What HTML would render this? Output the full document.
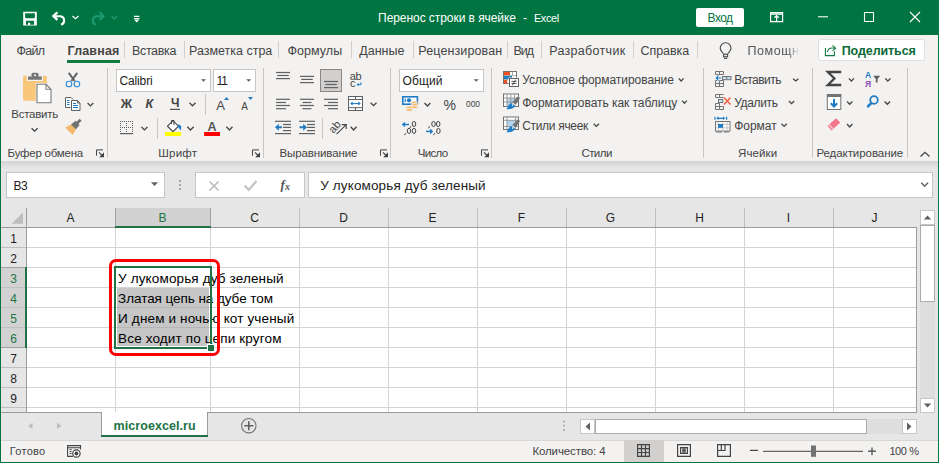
<!DOCTYPE html>
<html><head><meta charset="utf-8">
<style>
*{box-sizing:border-box;margin:0;padding:0}
html,body{width:939px;height:463px;overflow:hidden;background:#f3f2f1;font-family:"Liberation Sans",sans-serif;color:#444;position:relative}
.a{position:absolute}
.t{position:absolute;white-space:pre;line-height:1}
.box{position:absolute;background:#fff;border:1px solid #c6c6c6}
svg{overflow:visible}
</style></head><body>

<div class="a" style="left:0px;top:0px;width:939px;height:35px;background:#017541;"></div>
<div class="t m " style="left:378.10px;top:12.00px;font-size:12px;color:#fff;letter-spacing:-0.064px;">Перенос строки в ячейке</div>
<div class="t m " style="left:523.00px;top:12.00px;font-size:12px;color:#fff;">-</div>
<div class="t m " style="left:533.90px;top:13.00px;font-size:11px;color:#fff;letter-spacing:-0.400px;">Excel</div>
<div class="a" style="left:696px;top:8px;width:48px;height:19px;background:#fff;border-radius:2px"></div>
<div class="t m " style="left:707.60px;top:12.00px;font-size:12px;color:#017541;letter-spacing:-0.567px;">Вход</div>
<svg class="a" style="left:0px;top:0px;" width="939" height="35" viewBox="0 0 939 35">
<path fill="#fff" fill-rule="evenodd" d="M23.2 11.8 H36.8 V25.6 H23.2 Z M25.1 13.2 H34.9 V17.5 L34.1 18.3 H25.9 L25.1 17.5 Z M26 20.8 H34 V24.7 H30.2 V22.8 H28 V24.7 H26 Z"/>
<path fill="none" stroke="#fff" stroke-width="2" stroke-linecap="butt" d="M53.5 16.2 H60.5 A4.3 4.3 0 0 1 61 24.6"/>
<path fill="none" stroke="#fff" stroke-width="2.3" d="M57.4 12.4 L53.4 16.1 L57.4 19.8"/>
<path fill="none" stroke="#fff" stroke-width="1.2" d="M72.5 16 L75.5 18.8 L78.5 16"/>
<path fill="none" stroke="#1f9a74" stroke-width="2" d="M103.3 16.2 H96.3 A4.3 4.3 0 0 0 96 24.6"/>
<path fill="none" stroke="#1f9a74" stroke-width="2" d="M99.6 12.3 L103.6 16.2 L99.6 20.1"/>
<path fill="none" stroke="#1f9a74" stroke-width="1.2" d="M111.8 16.2 L114.5 18.8 L117.2 16.2"/>
<path fill="#fff" d="M134 15.8h5.4v1.2h-5.4z M134 18h5.4v1.1h-5.4z M134 19.6h5.4l-2.7 2.8z"/>
<path fill="none" stroke="#fff" stroke-width="1.2" d="M770.6 12.6h12v9h-12z M770.6 14.2h12 M776.6 15.8v6 M774.4 17.8l2.2-2.1 2.2 2.1"/>
<path fill="none" stroke="#fff" stroke-width="1.1" d="M818 16.8h10"/>
<path fill="none" stroke="#fff" stroke-width="1.1" d="M864.5 12.5h9v9h-9z"/>
<path fill="none" stroke="#fff" stroke-width="1.1" d="M910 12l10 10 M920 12l-10 10"/>
</svg>
<div class="t m " style="left:16.60px;top:45.00px;font-size:12.5px;color:#444;letter-spacing:-0.733px;">Файл</div>
<div class="t m " style="left:67.50px;top:45.00px;font-size:12.5px;color:#444;font-weight:700;letter-spacing:0.167px;">Главная</div>
<div class="t m " style="left:132.00px;top:45.00px;font-size:12.5px;color:#444;letter-spacing:-0.350px;">Вставка</div>
<div class="t m " style="left:189.00px;top:45.00px;font-size:12.5px;color:#444;letter-spacing:-0.008px;">Разметка стра</div>
<div class="t m " style="left:287.50px;top:45.00px;font-size:12.5px;color:#444;letter-spacing:0.050px;">Формулы</div>
<div class="t m " style="left:359.20px;top:45.00px;font-size:12.5px;color:#444;letter-spacing:0.020px;">Данные</div>
<div class="t m " style="left:418.30px;top:45.00px;font-size:12.5px;color:#444;letter-spacing:0.118px;">Рецензирован</div>
<div class="t m " style="left:513.60px;top:45.00px;font-size:12.5px;color:#444;letter-spacing:-1.100px;">Вид</div>
<div class="t m " style="left:549.20px;top:45.00px;font-size:12.5px;color:#444;letter-spacing:0.310px;">Разработчик</div>
<div class="t m " style="left:640.50px;top:45.00px;font-size:12.5px;color:#444;letter-spacing:-0.050px;">Справка</div>
<div class="a" style="left:124px;top:41px;width:1px;height:17px;background:#d2d0ce;"></div>
<div class="a" style="left:184px;top:41px;width:1px;height:17px;background:#d2d0ce;"></div>
<div class="a" style="left:278px;top:41px;width:1px;height:17px;background:#d2d0ce;"></div>
<div class="a" style="left:351px;top:41px;width:1px;height:17px;background:#d2d0ce;"></div>
<div class="a" style="left:413px;top:41px;width:1px;height:17px;background:#d2d0ce;"></div>
<div class="a" style="left:507px;top:41px;width:1px;height:17px;background:#d2d0ce;"></div>
<div class="a" style="left:541px;top:41px;width:1px;height:17px;background:#d2d0ce;"></div>
<div class="a" style="left:633px;top:41px;width:1px;height:17px;background:#d2d0ce;"></div>
<div class="a" style="left:697px;top:41px;width:1px;height:17px;background:#d2d0ce;"></div>
<div class="a" style="left:67px;top:60px;width:53px;height:3px;background:#107c41;"></div>
<div class="t m " style="left:747.60px;top:45.00px;font-size:12.5px;color:#555;letter-spacing:0.540px;-webkit-mask-image:linear-gradient(90deg,#000 0,#000 40px,transparent 51px);mask-image:linear-gradient(90deg,#000 0,#000 40px,transparent 51px);">Помощн</div>
<div class="a" style="left:818px;top:39px;width:107px;height:22px;background:#fff;border:1px solid #e1dfdd;border-radius:3px"></div>
<div class="t m " style="left:841.70px;top:45.00px;font-size:12.5px;color:#0b6a37;font-weight:700;letter-spacing:-0.100px;">Поделиться</div>
<svg class="a" style="left:0px;top:0px;z-index:6" width="939" height="70" viewBox="0 0 939 70"><path fill="none" stroke="#444" stroke-width="1.1" d="M723.2 53.6 C722.7 52.2 720.2 50.8 720.2 48.2 A5.4 5.4 0 0 1 731 48.2 C731 50.8 728.5 52.2 728 53.6"/><rect x="723.6" y="54.2" width="4" height="2.6" fill="none" stroke="#444" stroke-width="1.1"/><rect x="724" y="57.8" width="3.2" height="1.1" fill="#444"/><path fill="none" stroke="#107c41" stroke-width="1.1" d="M825.4 48.1 V55.6 H834.4 V51.2"/><path fill="none" stroke="#107c41" stroke-width="1.1" d="M827.4 51.8 C828 48.5 830.5 47.5 834.5 48.2 M832.5 45.3 L835.6 48.3 L832.5 50.9"/></svg>
<div class="a" style="left:107px;top:68px;width:1px;height:90px;background:#c8c6c4;"></div>
<div class="a" style="left:263px;top:68px;width:1px;height:90px;background:#c8c6c4;"></div>
<div class="a" style="left:390px;top:68px;width:1px;height:90px;background:#c8c6c4;"></div>
<div class="a" style="left:491px;top:68px;width:1px;height:90px;background:#c8c6c4;"></div>
<div class="a" style="left:703px;top:68px;width:1px;height:90px;background:#c8c6c4;"></div>
<div class="a" style="left:812px;top:68px;width:1px;height:90px;background:#c8c6c4;"></div>
<div class="a" style="left:907px;top:68px;width:1px;height:90px;background:#c8c6c4;"></div>
<div class="t m " style="left:7.60px;top:148.00px;font-size:11.5px;color:#444;letter-spacing:-0.227px;">Буфер обмена</div>
<div class="t m " style="left:158.30px;top:148.00px;font-size:11.5px;color:#444;letter-spacing:0.225px;">Шрифт</div>
<div class="t m " style="left:279.50px;top:148.00px;font-size:11.5px;color:#444;letter-spacing:-0.109px;">Выравнивание</div>
<div class="t m " style="left:417.80px;top:148.00px;font-size:11.5px;color:#444;letter-spacing:-0.700px;">Число</div>
<div class="t m " style="left:581.40px;top:148.00px;font-size:11.5px;color:#444;letter-spacing:-0.550px;">Стили</div>
<div class="t m " style="left:738.00px;top:148.00px;font-size:11.5px;color:#444;letter-spacing:0.120px;">Ячейки</div>
<div class="t m " style="left:816.40px;top:148.00px;font-size:11.5px;color:#444;letter-spacing:-0.062px;">Редактирование</div>
<div class="t m " style="left:11.20px;top:109.00px;font-size:11.5px;color:#444;letter-spacing:-0.229px;">Вставить</div>
<div class="box" style="left:116px;top:69px;width:95px;height:23px;border-color:#c8c6c4"></div>
<div class="box" style="left:213px;top:69px;width:43px;height:23px;border-color:#c8c6c4"></div>
<div class="box" style="left:399px;top:69px;width:85px;height:23px;border-color:#c8c6c4"></div>
<div class="a" style="left:320px;top:69px;width:22px;height:23px;background:#d2d0ce;border:1px solid #8a8886"></div>
<div class="t m " style="left:119.40px;top:75.00px;font-size:12px;color:#222;letter-spacing:-0.117px;">Calibri</div>
<div class="t m " style="left:216.50px;top:75.00px;font-size:12px;color:#222;">1</div>
<div class="t m " style="left:221.20px;top:75.00px;font-size:12px;color:#222;">1</div>
<div class="t m " style="left:402.40px;top:75.00px;font-size:12px;color:#222;letter-spacing:0.175px;">Общий</div>
<div class="t m " style="left:522.20px;top:74.00px;font-size:12px;color:#444;letter-spacing:-0.041px;">Условное форматирование</div>
<div class="t m " style="left:522.20px;top:97.00px;font-size:12px;color:#444;letter-spacing:-0.046px;">Форматировать как таблицу</div>
<div class="t m " style="left:522.20px;top:120.00px;font-size:12px;color:#444;letter-spacing:-0.310px;">Стили ячеек</div>
<div class="t m " style="left:734.30px;top:74.00px;font-size:12px;color:#444;letter-spacing:-0.529px;">Вставить</div>
<div class="t m " style="left:734.30px;top:97.00px;font-size:12px;color:#444;letter-spacing:-0.367px;">Удалить</div>
<div class="t m " style="left:734.30px;top:120.00px;font-size:12px;color:#444;letter-spacing:-0.060px;">Формат</div>
<div class="t m " style="left:120.80px;top:98.00px;font-size:12.5px;color:#444;font-weight:700;">Ж</div>
<div class="t m " style="left:145.60px;top:98.00px;font-size:12.5px;color:#444;font-weight:700;font-style:italic;">К</div>
<div class="t m " style="left:171.00px;top:97.00px;font-size:12px;color:#444;font-weight:700;">Ч</div>
<div class="t m " style="left:216.30px;top:99.00px;font-size:13px;color:#444;">A</div>
<div class="t m " style="left:241.30px;top:102.00px;font-size:10px;color:#444;">A</div>
<div class="t m " style="left:207.60px;top:121.00px;font-size:12.5px;color:#555;font-weight:700;">A</div>
<div class="t m " style="left:443.50px;top:98.00px;font-size:14px;color:#444;">%</div>
<div class="t m " style="left:466.00px;top:100.00px;font-size:8.5px;color:#444;letter-spacing:-0.100px;">000</div>
<div class="t m " style="left:349.70px;top:71.00px;font-size:11px;color:#444;letter-spacing:-0.300px;">ab</div>
<div class="t m " style="left:349.90px;top:78.00px;font-size:11px;color:#444;">c</div>
<div class="a" style="left:157px;top:118px;width:1px;height:21px;background:#c8c6c4;"></div>
<div class="a" style="left:205px;top:94px;width:1px;height:21px;background:#c8c6c4;"></div>
<div class="a" style="left:322px;top:118px;width:1px;height:21px;background:#c8c6c4;"></div>
<div class="t m " style="left:865.00px;top:71.00px;font-size:8.5px;color:#1e7bc4;font-weight:700;">A</div>
<div class="t m " style="left:865.00px;top:80.00px;font-size:8.5px;color:#8c50b4;font-weight:700;">Я</div>
<svg class="a" style="left:0px;top:0px;z-index:5" width="939" height="463" viewBox="0 0 939 463"><rect x="23" y="75.8" width="24" height="25" rx="1.5" fill="#f8c77a"/><path fill="#737373" stroke="#f3f2f1" stroke-width="1.2" d="M27.4 76 H42.4 V80.3 H27.4 Z"/><rect x="31.5" y="72.8" width="7" height="4.5" rx="1.5" fill="#737373"/><circle cx="35" cy="75.2" r="1" fill="#fff"/><path fill="#fff" stroke="#f3f2f1" stroke-width="2.5" d="M37 84.3 H46 L51 89.3 V102.7 H37 Z"/><path fill="#fff" stroke="#7a7a7a" stroke-width="1.1" d="M37 84.3 H46 L51 89.3 V102.7 H37 Z"/><path fill="none" stroke="#7a7a7a" stroke-width="1.1" d="M46 84.3 V89.3 H51"/><path fill="none" stroke="#444" stroke-width="1.3" d="M31.6 128.2 L34.6 131.2 L37.6 128.2"/><path fill="none" stroke="#616161" stroke-width="2" d="M68.8 72.8 L74.6 81 M77.2 72.8 L71.4 81"/><circle cx="69" cy="84" r="2.8" fill="none" stroke="#2b88d8" stroke-width="1.1"/><circle cx="76.9" cy="84" r="2.8" fill="none" stroke="#2b88d8" stroke-width="1.1"/><path fill="#fff" stroke="#616161" stroke-width="1" d="M65.5 97.5 H71 L73 99.5 V107.5 H65.5 Z"/><path fill="none" stroke="#1e7bc4" stroke-width="1" d="M67 100.5 H69.5 M67 102.5 H69.5 M67 104.5 H69.5"/><path fill="#fff" stroke="#f3f2f1" stroke-width="2" d="M71.5 100.5 H77.5 L80 103 V110.5 H71.5 Z"/><path fill="#fff" stroke="#616161" stroke-width="1" d="M71.5 100.5 H77.5 L80 103 V110.5 H71.5 Z M77.5 100.5 V103 H80"/><path fill="none" stroke="#1e7bc4" stroke-width="1" d="M73 103.5 H76 M73 105.5 H78 M73 107.5 H78"/><path fill="none" stroke="#444" stroke-width="1.3" d="M87.6 103 L90.44999999999999 105.9 L93.3 103"/><path fill="#f4b968" d="M65.2 127.6 L71.5 124.2 L76.2 129 L72.6 135 Z"/><path fill="#737373" d="M71 124.6 L75.5 120.8 L79.6 125 L75.9 129.3 Z"/><path fill="none" stroke="#737373" stroke-width="3" d="M76.5 123.8 L80.6 119.8"/><path fill="none" stroke="#444" stroke-width="1.3" d="M189.5 102.8 L192.5 105.8 L195.5 102.8"/><rect x="170" y="108.8" width="10" height="1.1" fill="#444"/><path fill="#1e7bc4" d="M224 100 L226.5 97 L229 100 Z M248 97.1 H253 L250.5 100 Z"/><rect x="120" y="121" width="1" height="1" fill="#616161"/><rect x="120" y="123" width="1" height="1" fill="#616161"/><rect x="120" y="125" width="1" height="1" fill="#616161"/><rect x="120" y="127" width="1" height="1" fill="#616161"/><rect x="120" y="129" width="1" height="1" fill="#616161"/><rect x="120" y="131" width="1" height="1" fill="#616161"/><rect x="122" y="121" width="1" height="1" fill="#616161"/><rect x="122" y="127" width="1" height="1" fill="#616161"/><rect x="124" y="121" width="1" height="1" fill="#616161"/><rect x="124" y="127" width="1" height="1" fill="#616161"/><rect x="126" y="121" width="1" height="1" fill="#616161"/><rect x="126" y="123" width="1" height="1" fill="#616161"/><rect x="126" y="125" width="1" height="1" fill="#616161"/><rect x="126" y="127" width="1" height="1" fill="#616161"/><rect x="126" y="129" width="1" height="1" fill="#616161"/><rect x="126" y="131" width="1" height="1" fill="#616161"/><rect x="128" y="121" width="1" height="1" fill="#616161"/><rect x="128" y="127" width="1" height="1" fill="#616161"/><rect x="130" y="121" width="1" height="1" fill="#616161"/><rect x="130" y="127" width="1" height="1" fill="#616161"/><rect x="132" y="121" width="1" height="1" fill="#616161"/><rect x="132" y="123" width="1" height="1" fill="#616161"/><rect x="132" y="125" width="1" height="1" fill="#616161"/><rect x="132" y="127" width="1" height="1" fill="#616161"/><rect x="132" y="129" width="1" height="1" fill="#616161"/><rect x="132" y="131" width="1" height="1" fill="#616161"/><rect x="120" y="133" width="13.2" height="1.2" fill="#616161"/><path fill="none" stroke="#444" stroke-width="1.3" d="M141.5 127 L144.45 129.9 L147.4 127"/><path fill="#fff" stroke="#444" stroke-width="1.1" d="M167.5 126.2 L173 120.7 L178.5 126.2 L173 131.7 Z"/><path fill="none" stroke="#444" stroke-width="1" d="M171.5 124 V120.5 H174 V125"/><path fill="#1e7bc4" d="M177.5 124.5 Q181.5 124.3 181.3 128 L180.5 130.4 L178.3 127 Z"/><rect x="165" y="132" width="16.2" height="4" fill="#ffff00"/><path fill="none" stroke="#444" stroke-width="1.3" d="M187.3 126.8 L190.5 130 L193.7 126.8"/><rect x="204.1" y="132" width="15.9" height="4" fill="#ff0000"/><path fill="none" stroke="#444" stroke-width="1.3" d="M226.4 126.8 L229.45 130 L232.5 126.8"/><rect x="276" y="71.9" width="14" height="1.2" fill="#616161"/><rect x="277.25" y="74.9" width="11.5" height="1.2" fill="#616161"/><rect x="276" y="78.0" width="14" height="1.2" fill="#616161"/><rect x="300" y="75.8" width="14" height="1.2" fill="#616161"/><rect x="301.25" y="78.8" width="11.5" height="1.2" fill="#616161"/><rect x="300" y="82.0" width="14" height="1.2" fill="#616161"/><rect x="324" y="80.9" width="14" height="1.2" fill="#616161"/><rect x="325.25" y="83.9" width="11.5" height="1.2" fill="#616161"/><rect x="324" y="87.0" width="14" height="1.2" fill="#616161"/><rect x="276" y="98.7" width="14" height="1.2" fill="#616161"/><rect x="276" y="101.9" width="10" height="1.2" fill="#616161"/><rect x="276" y="104.9" width="14" height="1.2" fill="#616161"/><rect x="276" y="108.1" width="10" height="1.2" fill="#616161"/><rect x="300" y="98.7" width="14" height="1.2" fill="#616161"/><rect x="302.5" y="101.9" width="9.0" height="1.2" fill="#616161"/><rect x="300" y="104.9" width="14" height="1.2" fill="#616161"/><rect x="302.5" y="108.1" width="9.0" height="1.2" fill="#616161"/><rect x="324" y="98.7" width="14" height="1.2" fill="#616161"/><rect x="328" y="101.9" width="10" height="1.2" fill="#616161"/><rect x="324" y="104.9" width="14" height="1.2" fill="#616161"/><rect x="328" y="108.1" width="10" height="1.2" fill="#616161"/><path fill="none" stroke="#1e7bc4" stroke-width="1" d="M361 82.3 V84.6 H357.5"/><path fill="#1e7bc4" d="M356.6 84.6 L358.6 83 V86.2 Z"/><rect x="348.5" y="96.5" width="14" height="14" fill="#fff" stroke="#616161" stroke-width="1"/><path fill="none" stroke="#616161" stroke-width="1" d="M348.5 99.5 H362.5 M348.5 107.7 H362.5 M355.5 96.5 V99.5 M355.5 107.7 V110.5"/><path fill="none" stroke="#1e7bc4" stroke-width="1.1" d="M351 103.6 H360"/><path fill="#1e7bc4" d="M350.2 103.6 L352.6 101.6 V105.6 Z M360.8 103.6 L358.4 101.6 V105.6 Z"/><path fill="none" stroke="#444" stroke-width="1.3" d="M370.6 102.8 L373.55 105.7 L376.5 102.8"/><rect x="275" y="120.7" width="16" height="1.2" fill="#616161"/><rect x="275" y="133.0" width="16" height="1.2" fill="#616161"/><rect x="283" y="123.9" width="8" height="1.2" fill="#616161"/><rect x="283" y="126.8" width="8" height="1.2" fill="#616161"/><rect x="283" y="130.0" width="8" height="1.2" fill="#616161"/><path fill="#1e7bc4" d="M275 127.3 L278.8 123.8 V126.3 H282 V128.3 H278.8 V130.8 Z"/><rect x="299" y="120.7" width="16" height="1.2" fill="#616161"/><rect x="299" y="133.0" width="16" height="1.2" fill="#616161"/><rect x="307" y="123.9" width="8" height="1.2" fill="#616161"/><rect x="307" y="126.8" width="8" height="1.2" fill="#616161"/><rect x="307" y="130.0" width="8" height="1.2" fill="#616161"/><path fill="#1e7bc4" d="M307 127.3 L303.2 123.8 V126.3 H299.5 V128.3 H303.2 V130.8 Z"/><text x="0" y="0" transform="translate(333.5,134) rotate(-50)" font-family="Liberation Sans" font-size="11" fill="#444">ab</text><path fill="none" stroke="#444" stroke-width="1.1" d="M336.6 134.2 L346 124.8 M341.8 124.6 H346.2 V129"/><path fill="none" stroke="#444" stroke-width="1.3" d="M350.7 126.8 L353.6 130 L356.5 126.8"/><rect x="402.8" y="96.8" width="14.6" height="7.4" fill="#fff" stroke="#1e7bc4" stroke-width="1.6"/><circle cx="409" cy="100.3" r="2.1" fill="#1e7bc4"/><rect x="404.6" y="98.6" width="1.2" height="3.5" fill="#1e7bc4"/><ellipse cx="414.5" cy="102.6" rx="3.4" ry="1.35" fill="#f4b968" stroke="#f3f2f1" stroke-width="0.8"/><ellipse cx="414.5" cy="104.9" rx="3.4" ry="1.35" fill="#f4b968" stroke="#f3f2f1" stroke-width="0.8"/><ellipse cx="414.5" cy="107.2" rx="3.4" ry="1.35" fill="#f4b968" stroke="#f3f2f1" stroke-width="0.8"/><ellipse cx="409.4" cy="107.4" rx="3.4" ry="1.35" fill="#f4b968" stroke="#f3f2f1" stroke-width="0.8"/><ellipse cx="409.4" cy="109.9" rx="3.4" ry="1.35" fill="#f4b968" stroke="#f3f2f1" stroke-width="0.8"/><path fill="none" stroke="#444" stroke-width="1.3" d="M424.5 103 L427.45 106 L430.4 103"/><ellipse cx="414" cy="124" rx="1.75" ry="2.55" fill="none" stroke="#444" stroke-width="1"/><path fill="none" stroke="#444" stroke-width="1" d="M411.0 126.2 L409.6 128.2"/><ellipse cx="409" cy="130.9" rx="1.75" ry="2.55" fill="none" stroke="#444" stroke-width="1"/><ellipse cx="414" cy="130.9" rx="1.75" ry="2.55" fill="none" stroke="#444" stroke-width="1"/><path fill="none" stroke="#444" stroke-width="1" d="M405.79999999999995 133.2 L404.4 135.2"/><ellipse cx="433.5" cy="124" rx="1.75" ry="2.55" fill="none" stroke="#444" stroke-width="1"/><ellipse cx="438.2" cy="124" rx="1.75" ry="2.55" fill="none" stroke="#444" stroke-width="1"/><path fill="none" stroke="#444" stroke-width="1" d="M429.79999999999995 126.2 L428.4 128.2"/><ellipse cx="438.4" cy="130.9" rx="1.75" ry="2.55" fill="none" stroke="#444" stroke-width="1"/><path fill="none" stroke="#444" stroke-width="1" d="M434.79999999999995 133.2 L433.4 135.2"/><path fill="none" stroke="#1e7bc4" stroke-width="1.4" d="M402.8 124.5 H409"/><path fill="none" stroke="#1e7bc4" stroke-width="1.4" d="M405 122.4 L402.8 124.5 L405 126.6"/><path fill="none" stroke="#1e7bc4" stroke-width="1.4" d="M426 131.4 H432.2"/><path fill="none" stroke="#1e7bc4" stroke-width="1.4" d="M430 129.3 L432.2 131.4 L430 133.5"/><path fill="none" stroke="#444" stroke-width="1" d="M96.5 155.7 V149.9 H103"/><path fill="none" stroke="#444" stroke-width="1.1" d="M99 152.3 L103.2 156.5"/><path fill="#444" d="M104 152.2 V157.2 H99.2 Z"/><path fill="none" stroke="#444" stroke-width="1" d="M252.5 155.7 V149.9 H259"/><path fill="none" stroke="#444" stroke-width="1.1" d="M255 152.3 L259.2 156.5"/><path fill="#444" d="M260 152.2 V157.2 H255.2 Z"/><path fill="none" stroke="#444" stroke-width="1" d="M380.5 155.7 V149.9 H387"/><path fill="none" stroke="#444" stroke-width="1.1" d="M383 152.3 L387.2 156.5"/><path fill="#444" d="M388 152.2 V157.2 H383.2 Z"/><path fill="none" stroke="#444" stroke-width="1" d="M481.5 155.7 V149.9 H488"/><path fill="none" stroke="#444" stroke-width="1.1" d="M484 152.3 L488.2 156.5"/><path fill="#444" d="M489 152.2 V157.2 H484.2 Z"/><rect x="503.5" y="71.5" width="13" height="12" fill="#fff" stroke="#737373" stroke-width="1"/><rect x="504" y="72" width="6" height="3.3" fill="#f25022"/><rect x="504" y="76" width="8" height="3.3" fill="#1e7bc4"/><rect x="504" y="80" width="3.2" height="3.3" fill="#f25022"/><path fill="none" stroke="#999" stroke-width="0.8" d="M504 75.6 H516 M504 79.6 H508 M512.5 72 V75.6"/><rect x="509.5" y="78.5" width="9" height="8" fill="#fff" stroke="#f3f2f1" stroke-width="2"/><rect x="509.5" y="78.5" width="9" height="8" fill="#fff" stroke="#616161" stroke-width="1"/><path fill="none" stroke="#444" stroke-width="0.9" d="M511.5 81.4 H516.5 M511.5 83.6 H516.5 M515.6 79.7 L512.4 85.3"/><rect x="503.5" y="94.0" width="15" height="12.5" fill="#fff" stroke="#737373" stroke-width="1"/><rect x="507" y="98.0" width="7.5" height="8" fill="#b4d4ee"/><path fill="none" stroke="#8f8f8f" stroke-width="0.9" d="M507 94.5 V106.5 M510.8 94.5 V106.5 M514.6 94.5 V106.5 M504 98.0 H518 M504 102.0 H518"/><path fill="#f3f2f1" d="M518.8 96.5 L520 97.5 L512 108.5 L505.5 109.5 Z"/><path fill="#737373" d="M518 96.3 L520 98.1 L515.8 104.7 L512.2 102.3 Z"/><path fill="#1e7bc4" d="M511.6 102.9 L515.2 105.7 Q513.8 109.1 506.6 109.3 Q508.2 104.5 511.6 102.9 Z"/><circle cx="512.6" cy="105.1" r="0.8" fill="#fff"/><rect x="503.5" y="117.0" width="15" height="12.5" fill="#fff" stroke="#737373" stroke-width="1"/><rect x="507" y="120.5" width="9" height="6" fill="#b4d4ee"/><path fill="none" stroke="#8f8f8f" stroke-width="0.9" d="M507 117.5 V129.5 M515.5 117.5 V129.5 M504 120.3 H518 M504 126.5 H518"/><path fill="#f3f2f1" d="M518.8 119.5 L520 120.5 L512 131.5 L505.5 132.5 Z"/><path fill="#737373" d="M518 119.3 L520 121.1 L515.8 127.7 L512.2 125.3 Z"/><path fill="#1e7bc4" d="M511.6 125.9 L515.2 128.7 Q513.8 132.1 506.6 132.3 Q508.2 127.5 511.6 125.9 Z"/><circle cx="512.6" cy="128.1" r="0.8" fill="#fff"/><path fill="none" stroke="#444" stroke-width="1.3" d="M678.7 78.4 L681.1500000000001 81 L683.6 78.4"/><path fill="none" stroke="#444" stroke-width="1.3" d="M682.1 100.6 L684.45 103.2 L686.8 100.6"/><path fill="none" stroke="#444" stroke-width="1.3" d="M593.7 123.8 L596.35 126.4 L599 123.8"/><path fill="none" stroke="#737373" stroke-width="1" d="M715.5 71.5 H723.5 V74.5 H715.5 Z M719.5 71.5 V74.5"/><path fill="none" stroke="#737373" stroke-width="1" d="M715.5 80.5 H723.5 V86.5 H715.5 Z M715.5 83.5 H723.5 M719.5 80.5 V86.5"/><rect x="722.5" y="76.5" width="8.5" height="3.2" fill="#c5e0f5" stroke="#737373" stroke-width="1"/><path stroke="#737373" stroke-width="1" d="M726.7 76.5 V79.7"/><path fill="#1e7bc4" stroke="#f3f2f1" stroke-width="0.8" d="M715 78 L718.3 74.8 L719.5 75.9 L718 77.1 H721.5 V78.9 H718 L719.5 80.1 L718.3 81.2 Z"/><path fill="none" stroke="#737373" stroke-width="1" d="M723.5 94.5 H715.5 V97.5 H719.5 V94.5 M723.5 97.5 H719.5"/><rect x="718.5" y="99.5" width="4.3" height="3" fill="#c5e0f5" stroke="#737373" stroke-width="1"/><path fill="none" stroke="#737373" stroke-width="1" d="M715.5 103.5 H719.5 V109.5 H715.5 Z M715.5 106.5 H723.5 V109.5 H719.5 M723.5 106.5"/><path fill="none" stroke="#f25c3f" stroke-width="1.5" d="M724 97.5 L730.5 104.5 M730.5 97.5 L724 104.5"/><path fill="none" stroke="#1e7bc4" stroke-width="1.2" d="M715 116.8 V119.8 M726.6 116.8 V119.8 M717 118.3 H724.6"/><path fill="#1e7bc4" d="M716.4 118.3 L718.6 116.5 V120.1 Z M725.2 118.3 L723 116.5 V120.1 Z"/><rect x="715.5" y="121.5" width="14.5" height="9.5" fill="#fff" stroke="#737373" stroke-width="1"/><path fill="none" stroke="#bbb" stroke-width="0.8" d="M718.5 122 V131 M723 122 V131 M727 122 V131 M716 124.3 H729.5 M716 127.8 H729.5"/><rect x="718" y="124" width="5" height="3.8" fill="#1e7bc4"/><path fill="none" stroke="#737373" stroke-width="1" d="M716 132 H722 M724 132 H729"/><path fill="none" stroke="#444" stroke-width="1.3" d="M793.1 78.8 L795.75 81 L798.4 78.8"/><path fill="none" stroke="#444" stroke-width="1.3" d="M788.9 101 L791.55 103.6 L794.2 101"/><path fill="none" stroke="#444" stroke-width="1.3" d="M781.5 123.8 L784.15 126.4 L786.8 123.8"/><path fill="none" stroke="#444" stroke-width="2.3" stroke-linejoin="miter" d="M841.2 72 H827.8 L834.4 78.5 L827.8 85 H841.2"/><path fill="none" stroke="#444" stroke-width="1.3" d="M848.8 78.4 L851.4 81 L854 78.4"/><path fill="none" stroke="#444" stroke-width="1.3" d="M885.2 78.4 L887.85 81 L890.5 78.4"/><path fill="#616161" d="M873.2 75.8 H880.2 L877.6 79 V82.6 H875.8 V79 Z"/><rect x="827.3" y="94.5" width="13.5" height="15" fill="#fff" stroke="#737373" stroke-width="1"/><rect x="827" y="94" width="14.2" height="3" fill="#737373"/><path fill="none" stroke="#1e7bc4" stroke-width="2" d="M834 99 V106"/><path fill="none" stroke="#1e7bc4" stroke-width="2" d="M830.8 103.3 L834 106.5 L837.2 103.3"/><path fill="none" stroke="#444" stroke-width="1.3" d="M847 101.5 L849.7 104.3 L852.4 101.5"/><circle cx="874" cy="100" r="3.8" fill="none" stroke="#1e7bc4" stroke-width="1.8"/><path fill="none" stroke="#1e7bc4" stroke-width="2.6" stroke-linecap="round" d="M868 106.3 L871.2 103.1"/><path fill="none" stroke="#444" stroke-width="1.3" d="M884.6 101.5 L887.35 104.3 L890.1 101.5"/><path fill="#f4768a" d="M827.5 126 L836 118.2 L840.2 122.5 L831.7 130.5 Z"/><path fill="#fbc3cc" d="M829.5 124.2 L833.7 128.3 L832.5 129.4 L828.4 125.3 Z"/><path fill="none" stroke="#444" stroke-width="1.3" d="M847 124 L849.7 127 L852.4 124"/><path fill="none" stroke="#444" stroke-width="1.3" d="M920.5 156.5 L925 152.3 L929.5 156.5"/><path fill="#616161" d="M201 79.2 H206 L203.5 81.8 Z"/><path fill="#616161" d="M246.2 79.2 H251.2 L248.7 81.8 Z"/><path fill="#616161" d="M473.6 79.2 H478.8 L476.20000000000005 81.8 Z"/></svg>
<div class="a" style="left:0px;top:161px;width:939px;height:47px;background:#e6e6e6;"></div>
<div class="a" style="left:0;top:161px;width:939px;height:7px;background:linear-gradient(#d2d2d2,#e6e6e6)"></div>
<div class="box" style="left:6px;top:172px;width:159px;height:26px"></div>
<div class="box" style="left:195px;top:172px;width:110px;height:26px"></div>
<div class="box" style="left:308px;top:172px;width:625px;height:26px"></div>
<div class="t m " style="left:13.40px;top:180.00px;font-size:12px;color:#222;letter-spacing:-0.300px;">B3</div>
<div class="t m " style="left:320.20px;top:179.00px;font-size:13.5px;color:#222;letter-spacing:0.141px;">У лукоморья дуб зеленый</div>
<svg class="a" style="left:0px;top:0px;z-index:6" width="939" height="463" viewBox="0 0 939 463"><path fill="#616161" d="M151 182.2 H158 L154.5 186 Z"/><circle cx="180" cy="181" r="0.9" fill="#888"/><circle cx="180" cy="185" r="0.9" fill="#888"/><circle cx="180" cy="189" r="0.9" fill="#888"/><path fill="none" stroke="#bdbdbd" stroke-width="1.7" d="M209.5 181.5 L218.5 190.5 M218.5 181.5 L209.5 190.5"/><path fill="none" stroke="#c4c4c4" stroke-width="2.2" d="M244.5 185.5 L248.8 189.8 L256.5 181"/><text x="280.5" y="189" font-family="Liberation Serif" font-style="italic" font-weight="bold" font-size="13" fill="#555">f</text><text x="285" y="190.3" font-family="Liberation Serif" font-style="italic" font-weight="bold" font-size="10" fill="#555">x</text><path fill="none" stroke="#616161" stroke-width="1.5" d="M921.3 182.8 L924.6 186.2 L928 182.8"/></svg>
<div class="a" style="left:0px;top:208px;width:939px;height:20px;background:#e6e6e6;"></div>
<div class="a" style="left:0px;top:228px;width:27px;height:184px;background:#e6e6e6;"></div>
<div class="a" style="left:917px;top:228px;width:21px;height:185px;background:#e6e6e6;"></div>
<div class="a" style="left:27px;top:228px;width:889px;height:184px;background:#fff;"></div>
<div class="a" style="left:115px;top:208px;width:95px;height:19px;background:#d2d2d2;"></div>
<div class="a" style="left:115px;top:226px;width:95px;height:2px;background:#217346;"></div>
<div class="a" style="left:1px;top:268px;width:25px;height:80px;background:#d2d2d2;"></div>
<div class="a" style="left:25px;top:268px;width:2px;height:80px;background:#217346;"></div>
<div class="a" style="left:115px;top:228px;width:1px;height:184px;background:#d4d4d4;"></div>
<div class="a" style="left:115px;top:208px;width:1px;height:19px;background:#bfbfbf;"></div>
<div class="a" style="left:210px;top:228px;width:1px;height:184px;background:#d4d4d4;"></div>
<div class="a" style="left:210px;top:208px;width:1px;height:19px;background:#bfbfbf;"></div>
<div class="a" style="left:299px;top:228px;width:1px;height:184px;background:#d4d4d4;"></div>
<div class="a" style="left:299px;top:208px;width:1px;height:19px;background:#bfbfbf;"></div>
<div class="a" style="left:388px;top:228px;width:1px;height:184px;background:#d4d4d4;"></div>
<div class="a" style="left:388px;top:208px;width:1px;height:19px;background:#bfbfbf;"></div>
<div class="a" style="left:477px;top:228px;width:1px;height:184px;background:#d4d4d4;"></div>
<div class="a" style="left:477px;top:208px;width:1px;height:19px;background:#bfbfbf;"></div>
<div class="a" style="left:566px;top:228px;width:1px;height:184px;background:#d4d4d4;"></div>
<div class="a" style="left:566px;top:208px;width:1px;height:19px;background:#bfbfbf;"></div>
<div class="a" style="left:655px;top:228px;width:1px;height:184px;background:#d4d4d4;"></div>
<div class="a" style="left:655px;top:208px;width:1px;height:19px;background:#bfbfbf;"></div>
<div class="a" style="left:744px;top:228px;width:1px;height:184px;background:#d4d4d4;"></div>
<div class="a" style="left:744px;top:208px;width:1px;height:19px;background:#bfbfbf;"></div>
<div class="a" style="left:833px;top:228px;width:1px;height:184px;background:#d4d4d4;"></div>
<div class="a" style="left:833px;top:208px;width:1px;height:19px;background:#bfbfbf;"></div>
<div class="a" style="left:27px;top:247px;width:889px;height:1px;background:#d4d4d4;"></div>
<div class="a" style="left:1px;top:247px;width:25px;height:1px;background:#bfbfbf;"></div>
<div class="a" style="left:27px;top:267px;width:889px;height:1px;background:#d4d4d4;"></div>
<div class="a" style="left:1px;top:267px;width:25px;height:1px;background:#bfbfbf;"></div>
<div class="a" style="left:27px;top:287px;width:889px;height:1px;background:#d4d4d4;"></div>
<div class="a" style="left:1px;top:287px;width:25px;height:1px;background:#bfbfbf;"></div>
<div class="a" style="left:27px;top:307px;width:889px;height:1px;background:#d4d4d4;"></div>
<div class="a" style="left:1px;top:307px;width:25px;height:1px;background:#bfbfbf;"></div>
<div class="a" style="left:27px;top:327px;width:889px;height:1px;background:#d4d4d4;"></div>
<div class="a" style="left:1px;top:327px;width:25px;height:1px;background:#bfbfbf;"></div>
<div class="a" style="left:27px;top:347px;width:889px;height:1px;background:#d4d4d4;"></div>
<div class="a" style="left:1px;top:347px;width:25px;height:1px;background:#bfbfbf;"></div>
<div class="a" style="left:27px;top:367px;width:889px;height:1px;background:#d4d4d4;"></div>
<div class="a" style="left:1px;top:367px;width:25px;height:1px;background:#bfbfbf;"></div>
<div class="a" style="left:27px;top:387px;width:889px;height:1px;background:#d4d4d4;"></div>
<div class="a" style="left:1px;top:387px;width:25px;height:1px;background:#bfbfbf;"></div>
<div class="a" style="left:27px;top:407px;width:889px;height:1px;background:#d4d4d4;"></div>
<div class="a" style="left:1px;top:407px;width:25px;height:1px;background:#bfbfbf;"></div>
<div class="a" style="left:1px;top:227px;width:916px;height:1px;background:#9b9b9b;"></div>
<div class="a" style="left:26px;top:208px;width:1px;height:205px;background:#9b9b9b;"></div>
<div class="a" style="left:916px;top:227px;width:1px;height:186px;background:#9b9b9b;"></div>
<div class="a" style="left:1px;top:412px;width:916px;height:1px;background:#9b9b9b;"></div>
<div class="a" style="left:115px;top:208px;width:1px;height:19px;background:#a0a0a0;"></div>
<div class="a" style="left:210px;top:208px;width:1px;height:19px;background:#a0a0a0;"></div>
<div class="a" style="left:1px;top:267px;width:24px;height:1px;background:#a0a0a0;"></div>
<div class="a" style="left:1px;top:347px;width:24px;height:1px;background:#a0a0a0;"></div>
<div class="a" style="left:115px;top:226px;width:96px;height:2px;background:#217346;"></div>
<div class="a" style="left:25px;top:267px;width:2px;height:81px;background:#217346;"></div>
<svg class="a" style="left:0px;top:0px;" width="40" height="240" viewBox="0 0 40 240"><path fill="#bdbdbd" d="M23 212.5 V223.8 H11.7 Z"/></svg>
<div class="t" style="left:26px;width:89px;text-align:center;top:212px;font-size:12px;color:#222">A</div>
<div class="t" style="left:115px;width:95px;text-align:center;top:212px;font-size:12px;color:#217346">B</div>
<div class="t" style="left:210px;width:89px;text-align:center;top:212px;font-size:12px;color:#222">C</div>
<div class="t" style="left:299px;width:89px;text-align:center;top:212px;font-size:12px;color:#222">D</div>
<div class="t" style="left:388px;width:89px;text-align:center;top:212px;font-size:12px;color:#222">E</div>
<div class="t" style="left:477px;width:89px;text-align:center;top:212px;font-size:12px;color:#222">F</div>
<div class="t" style="left:566px;width:89px;text-align:center;top:212px;font-size:12px;color:#222">G</div>
<div class="t" style="left:655px;width:89px;text-align:center;top:212px;font-size:12px;color:#222">H</div>
<div class="t" style="left:744px;width:89px;text-align:center;top:212px;font-size:12px;color:#222">I</div>
<div class="t" style="left:833px;width:83px;text-align:center;top:212px;font-size:12px;color:#222">J</div>
<div class="t" style="left:1px;width:25px;text-align:center;top:233px;font-size:12px;color:#222">1</div>
<div class="t" style="left:1px;width:25px;text-align:center;top:253px;font-size:12px;color:#222">2</div>
<div class="t" style="left:1px;width:25px;text-align:center;top:273px;font-size:12px;color:#217346">3</div>
<div class="t" style="left:1px;width:25px;text-align:center;top:293px;font-size:12px;color:#217346">4</div>
<div class="t" style="left:1px;width:25px;text-align:center;top:313px;font-size:12px;color:#217346">5</div>
<div class="t" style="left:1px;width:25px;text-align:center;top:333px;font-size:12px;color:#217346">6</div>
<div class="t" style="left:1px;width:25px;text-align:center;top:353px;font-size:12px;color:#222">7</div>
<div class="t" style="left:1px;width:25px;text-align:center;top:373px;font-size:12px;color:#222">8</div>
<div class="t" style="left:1px;width:25px;text-align:center;top:393px;font-size:12px;color:#222">9</div>
<div class="a" style="left:117px;top:288px;width:92px;height:58px;background:#c6c6c6;"></div>
<div class="a" style="left:117px;top:307px;width:92px;height:1px;background:#b4b4b4;"></div>
<div class="a" style="left:117px;top:327px;width:92px;height:1px;background:#b4b4b4;"></div>
<div class="t m " style="left:118.10px;top:272.00px;font-size:13.5px;color:#000;letter-spacing:0.141px;">У лукоморья дуб зеленый</div>
<div class="t m " style="left:118.10px;top:292.00px;font-size:13.5px;color:#000;letter-spacing:-0.059px;">Златая цепь на дубе том</div>
<div class="t m " style="left:118.10px;top:312.00px;font-size:13.5px;color:#000;letter-spacing:0.154px;">И днем и ночью кот ученый</div>
<div class="t m " style="left:118.10px;top:332.00px;font-size:13.5px;color:#000;letter-spacing:0.152px;">Все ходит по цепи кругом</div>
<div class="a" style="left:114px;top:266px;width:98px;height:83px;border:2px solid #217346;z-index:3"></div>
<div class="a" style="left:207px;top:344px;width:7px;height:7px;background:#fff;z-index:3"></div>
<div class="a" style="left:208px;top:345px;width:5.5px;height:5.5px;background:#217346;z-index:4"></div>
<div class="a" style="left:109px;top:259px;width:111px;height:97px;border:3px solid #ff0000;border-radius:7px;z-index:8"></div>
<div class="a" style="left:1px;top:413px;width:937px;height:27px;background:#e6e6e6;"></div>
<div class="a" style="left:1px;top:440px;width:937px;height:22px;background:#f3f2f1;"></div>
<div class="a" style="left:1px;top:440px;width:937px;height:1px;background:#d6d6d6;"></div>
<div class="a" style="left:102px;top:412px;width:106px;height:24px;background:#fff;"></div>
<div class="a" style="left:101px;top:412px;width:1px;height:25px;background:#9b9b9b;"></div>
<div class="a" style="left:207px;top:412px;width:1px;height:25px;background:#9b9b9b;"></div>
<div class="a" style="left:101px;top:435px;width:107px;height:2px;background:#217346;"></div>
<div class="t m " style="left:113.60px;top:420.00px;font-size:12.5px;color:#217346;font-weight:700;letter-spacing:0.058px;">microexcel.ru</div>
<div class="t m " style="left:9.80px;top:446.00px;font-size:11px;color:#444;letter-spacing:0.280px;">Готово</div>
<div class="t m " style="left:532.40px;top:446.00px;font-size:11.5px;color:#444;letter-spacing:-0.108px;">Количество: 4</div>
<div class="t m " style="left:889.40px;top:446.00px;font-size:11px;color:#444;letter-spacing:-0.400px;">100 %</div>
<svg class="a" style="left:0px;top:0px;z-index:6" width="939" height="463" viewBox="0 0 939 463"><path fill="#bdbdbd" d="M32.5 422.8 V429 L28 425.9 Z M57 422.8 V429 L61.5 425.9 Z"/><circle cx="248.8" cy="425.7" r="7.2" fill="none" stroke="#737373" stroke-width="1.1"/><path fill="none" stroke="#616161" stroke-width="1.6" d="M244.3 425.7 H253.3 M248.8 421.2 V430.2"/><rect x="920" y="225" width="15" height="173" fill="#dedede"/><rect x="920.5" y="210.5" width="14" height="14" fill="#fff" stroke="#c6c6c6"/><path fill="#616161" d="M923.8 219.5 H931.2 L927.5 215.5 Z"/><rect x="920.5" y="225.5" width="14" height="76" fill="#fff" stroke="#ababab"/><rect x="920.5" y="398.5" width="14" height="14" fill="#fff" stroke="#c6c6c6"/><path fill="#616161" d="M923.8 403.5 H931.2 L927.5 407.5 Z"/><circle cx="564" cy="421.5" r="0.9" fill="#999"/><circle cx="564" cy="425.7" r="0.9" fill="#999"/><circle cx="564" cy="429.9" r="0.9" fill="#999"/><rect x="580" y="419" width="337" height="15" fill="#dedede"/><rect x="580.5" y="419.5" width="14" height="14" fill="#fff" stroke="#c6c6c6"/><path fill="#616161" d="M590 422.5 V430.5 L585.5 426.5 Z"/><rect x="595.5" y="419.5" width="271" height="14" fill="#fff" stroke="#ababab"/><rect x="902.5" y="419.5" width="14" height="14" fill="#fff" stroke="#c6c6c6"/><path fill="#616161" d="M907 422.5 V430.5 L911.5 426.5 Z"/><rect x="624" y="440" width="40" height="22" fill="#d2d0ce"/><path fill="none" stroke="#444" stroke-width="1.2" d="M637.6 444.6 H649.4 V456.4 H637.6 Z M637.6 448.6 H649.4 M637.6 452.5 H649.4 M641.5 444.6 V456.4 M645.5 444.6 V456.4"/><path fill="none" stroke="#444" stroke-width="1.2" d="M677.6 444.6 H690.4 V456.4 H677.6 Z M680.6 447.6 H687.4 V453.4 H680.6 Z M682.2 449.2 H685.8 M682.2 450.6 H685.8 M682.2 452 H685.8"/><path fill="none" stroke="#444" stroke-width="1.2" d="M717.6 444.6 H730.4 V456.4 H717.6 Z M717.6 450.5 H725 V444.6 M721.3 444.6 V450.5"/><rect x="750" y="449.8" width="8" height="1.2" fill="#444"/><rect x="763" y="450.8" width="100" height="1" fill="#444"/><rect x="811" y="445.5" width="5" height="11.3" fill="#737373"/><path fill="none" stroke="#444" stroke-width="1.2" d="M868 451.2 H876 M872 447.4 V455.2"/><path fill="none" stroke="#444" stroke-width="1.1" d="M73 456.4 H67.6 V445.6 H80.5 V449.5 M67.6 447.7 H80.5"/><path fill="none" stroke="#444" stroke-width="1" d="M69.6 449.6 H71.6 M69.6 451.6 H71.6 M69.6 453.6 H71.6"/><circle cx="76.4" cy="453.5" r="4.6" fill="#f3f2f1"/><circle cx="76.4" cy="453.5" r="3.7" fill="#fff" stroke="#444" stroke-width="1.2"/><circle cx="76.4" cy="453.5" r="1.9" fill="#444"/></svg>
<div class="a" style="left:0px;top:35px;width:1px;height:428px;background:#017541;z-index:50"></div>
<div class="a" style="left:938px;top:35px;width:1px;height:428px;background:#017541;z-index:50"></div>
<div class="a" style="left:0px;top:462px;width:939px;height:1px;background:#017541;z-index:50"></div>
</body></html>
